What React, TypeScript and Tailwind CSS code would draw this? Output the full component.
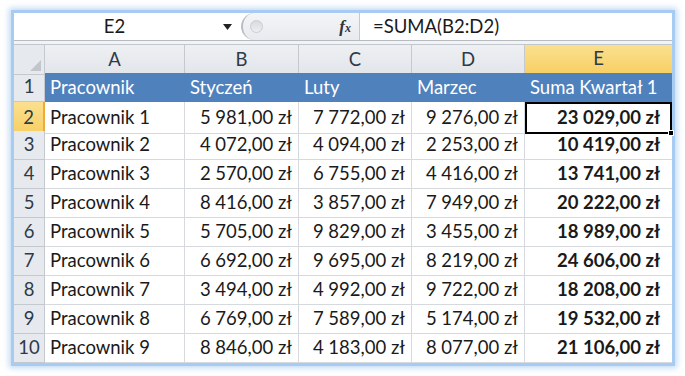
import React from "react";

const rows: string[][] = [
  ["Pracownik 1", "5 981,00 zł", "7 772,00 zł", "9 276,00 zł", "23 029,00 zł"],
  ["Pracownik 2", "4 072,00 zł", "4 094,00 zł", "2 253,00 zł", "10 419,00 zł"],
  ["Pracownik 3", "2 570,00 zł", "6 755,00 zł", "4 416,00 zł", "13 741,00 zł"],
  ["Pracownik 4", "8 416,00 zł", "3 857,00 zł", "7 949,00 zł", "20 222,00 zł"],
  ["Pracownik 5", "5 705,00 zł", "9 829,00 zł", "3 455,00 zł", "18 989,00 zł"],
  ["Pracownik 6", "6 692,00 zł", "9 695,00 zł", "8 219,00 zł", "24 606,00 zł"],
  ["Pracownik 7", "3 494,00 zł", "4 992,00 zł", "9 722,00 zł", "18 208,00 zł"],
  ["Pracownik 8", "6 769,00 zł", "7 589,00 zł", "5 174,00 zł", "19 532,00 zł"],
  ["Pracownik 9", "8 846,00 zł", "4 183,00 zł", "8 077,00 zł", "21 106,00 zł"],
];

const nb = (s: string) => s.replace(/ (?=\d)/g, "\u00a0");

const cols = "grid grid-cols-[31px_140px_114px_113px_113px_147px]";

export default function App() {
  return (
    <div className="w-[685px] h-[376px] bg-white pt-[10px] pl-[11px] font-['Lato','Liberation_Sans',sans-serif] text-[18.5px] text-[#1a1a1a]">
      <div className="w-[664px] border-[3px] border-[#a8cbf2] shadow-[0_0_6px_2px_rgba(140,185,235,0.55)] bg-white">
        {/* formula bar */}
        <div className="flex h-[27px] items-center bg-white">
          <div className="w-[201px] text-center leading-none">E2</div>
          <div className="w-[24px] flex justify-center">
            <svg width="9" height="6" viewBox="0 0 9 6">
              <path d="M0 0h9L4.5 6z" fill="#222" />
            </svg>
          </div>
          <div className="ml-[2px] h-[27px] w-[118px] flex items-center rounded-l-full border-l-2 border-[#b9bec6] bg-gradient-to-b from-[#f4f5f7] to-[#e8eaee] pl-[7px]">
            <div className="w-[13px] h-[13px] rounded-full bg-gradient-to-b from-[#d8dade] to-[#eceef0] border border-[#c9ccd1]" />
            <span className="ml-auto mr-[8px] font-['Liberation_Serif',serif] italic font-bold text-[17px] text-[#333]">
              f<span className="text-[12px]">x</span>
            </span>
          </div>
          <div className="h-[27px] border-l border-[#c5c9cf] pl-[13px] flex items-center leading-none">
            =SUMA(B2:D2)
          </div>
        </div>
        <div className="h-px bg-[#b7bcc3]" />
        <div className="h-[3px] bg-[#f1f3f5]" />
        <div className="h-px bg-[#c2c7ce]" />

        {/* column headers */}
        <div className={`${cols} h-[28px] text-[#2f3a48]`}>
          <div className="relative bg-[#e6e9ed] border-r border-b border-[#c4c9d0]">
            <svg className="absolute right-[3px] bottom-[3px]" width="11" height="11" viewBox="0 0 11 11">
              <path d="M11 0v11H0z" fill="#c2c6cc" />
            </svg>
          </div>
          {["A", "B", "C", "D"].map((c) => (
            <div
              key={c}
              className="flex items-center justify-center bg-gradient-to-b from-[#eef0f3] to-[#e2e5ea] border-r border-b border-[#c4c9d0]"
            >
              {c}
            </div>
          ))}
          <div className="flex items-center justify-center bg-gradient-to-b from-[#fbe08f] to-[#f7cf64] border-b-2 border-[#f0a93c]">
            E
          </div>
        </div>

        {/* row 1 */}
        <div className={`${cols} h-[29px]`}>
          <div className="flex items-center justify-center bg-[#e6e9ed] border-r border-b border-[#c4c9d0] text-[#2f3a48]">
            1
          </div>
          {["Pracownik", "Styczeń", "Luty", "Marzec", "Suma Kwartał 1"].map((h) => (
            <div key={h} className="flex items-center pl-[5px] bg-[#4f81bd] text-white whitespace-nowrap">
              {h}
            </div>
          ))}
        </div>

        {rows.map((r, i) => {
          const sel = i === 0;
          return (
            <div key={i} className={`${cols} h-[29px]`}>
              <div
                className={
                  sel
                    ? "flex items-center justify-center bg-gradient-to-b from-[#fbe08f] to-[#f7cf64] border-r-2 border-b border-[#f0a93c] text-[#2f3a48]"
                    : "flex items-center justify-center bg-[#e6e9ed] border-r border-b border-[#c4c9d0] text-[#2f3a48]"
                }
              >
                {i + 2}
              </div>
              <div className="flex items-center pl-[5px] border-r border-b border-[#d6d9dd] whitespace-nowrap">
                {r[0]}
              </div>
              {r.slice(1, 4).map((v, j) => (
                <div
                  key={j}
                  className="flex items-center justify-end pr-[6px] border-r border-b border-[#d6d9dd] whitespace-nowrap"
                >
                  {nb(v)}
                </div>
              ))}
              <div
                className={
                  sel
                    ? "relative flex items-center justify-end pr-[10px] font-bold border-2 border-black whitespace-nowrap"
                    : "flex items-center justify-end pr-[12px] font-bold border-b border-[#d6d9dd] whitespace-nowrap"
                }
              >
                {nb(r[4])}
                {sel && (
                  <div className="absolute right-[-4px] bottom-[-4px] w-[6px] h-[6px] bg-black border border-white" />
                )}
              </div>
            </div>
          );
        })}
      </div>
    </div>
  );
}
